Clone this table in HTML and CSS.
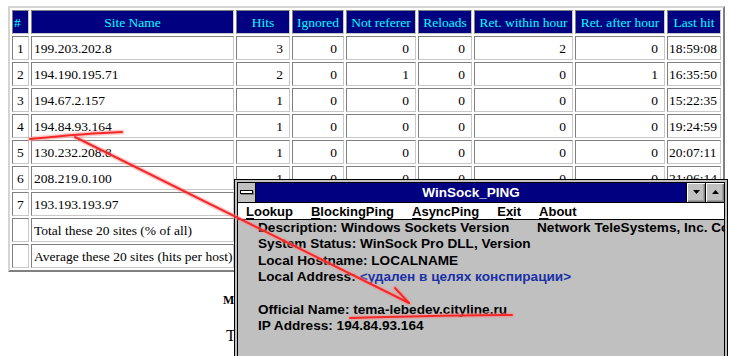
FILE: index.html
```html
<!DOCTYPE html>
<html>
<head>
<meta charset="utf-8">
<title>Top sites</title>
<link rel="stylesheet" href="styles.css">
</head>
<body>
<table class="stats">
  <thead>
    <tr>
      <th class="c-idx">#</th>
      <th class="c-site">Site Name</th>
      <th class="c-hits">Hits</th>
      <th class="c-ign">Ignored</th>
      <th class="c-nref">Not referer</th>
      <th class="c-rel">Reloads</th>
      <th class="c-rwh">Ret. within hour</th>
      <th class="c-rah">Ret. after hour</th>
      <th class="c-last">Last hit</th>
    </tr>
  </thead>
  <tbody>
    <tr><td class="idx">1</td><td class="site">199.203.202.8</td><td class="n">3</td><td class="n">0</td><td class="n">0</td><td class="n">0</td><td class="n">2</td><td class="n">0</td><td class="time">18:59:08</td></tr>
    <tr><td class="idx">2</td><td class="site">194.190.195.71</td><td class="n">2</td><td class="n">0</td><td class="n">1</td><td class="n">0</td><td class="n">0</td><td class="n">1</td><td class="time">16:35:50</td></tr>
    <tr><td class="idx">3</td><td class="site">194.67.2.157</td><td class="n">1</td><td class="n">0</td><td class="n">0</td><td class="n">0</td><td class="n">0</td><td class="n">0</td><td class="time">15:22:35</td></tr>
    <tr><td class="idx">4</td><td class="site">194.84.93.164</td><td class="n">1</td><td class="n">0</td><td class="n">0</td><td class="n">0</td><td class="n">0</td><td class="n">0</td><td class="time">19:24:59</td></tr>
    <tr><td class="idx">5</td><td class="site">130.232.208.8</td><td class="n">1</td><td class="n">0</td><td class="n">0</td><td class="n">0</td><td class="n">0</td><td class="n">0</td><td class="time">20:07:11</td></tr>
    <tr><td class="idx">6</td><td class="site">208.219.0.100</td><td class="n">1</td><td class="n">0</td><td class="n">0</td><td class="n">0</td><td class="n">0</td><td class="n">0</td><td class="time">21:06:14</td></tr>
    <tr><td class="idx">7</td><td class="site">193.193.193.97</td><td class="n">1</td><td class="n">0</td><td class="n">0</td><td class="n">0</td><td class="n">0</td><td class="n">0</td><td class="time">22:41:03</td></tr>
    <tr><td class="idx"></td><td class="site">Total these 20 sites (% of all)</td><td class="n">10</td><td class="n">0</td><td class="n">1</td><td class="n">0</td><td class="n">2</td><td class="n">1</td><td class="time"></td></tr>
    <tr><td class="idx"></td><td class="site">Average these 20 sites (hits per host)</td><td class="n">1.4</td><td class="n">0</td><td class="n">0.1</td><td class="n">0</td><td class="n">0.3</td><td class="n">0.1</td><td class="time"></td></tr>
  </tbody>
</table>

<div class="sub-heading">Most active hosts</div>
<div class="sub-title">Top 20 referring pages</div>

<div class="window">
  <div class="frame">
    <div class="titlebar">
      <div class="sysbox"><span class="dash"></span></div>
      <div class="title">WinSock_PING</div>
      <div class="btn"><svg width="9" height="5" viewBox="0 0 9 5"><polygon points="1,0 8,0 4.5,4" fill="#000"/></svg></div>
      <div class="btn"><svg width="9" height="5" viewBox="0 0 9 5"><polygon points="1,4 8,4 4.5,0" fill="#000"/></svg></div>
    </div>
    <div class="menubar">
      <span><u>L</u>ookup</span>
      <span><u>B</u>lockingPing</span>
      <span><u>A</u>syncPing</span>
      <span>E<u>x</u>it</span>
      <span><u>A</u>bout</span>
    </div>
    <div class="client">
      <div class="line"><span class="col1">Description: Windows Sockets Version</span><span>Network TeleSystems, Inc. Copyright</span></div>
      <div class="line">System Status: WinSock Pro DLL, Version</div>
      <div class="line">Local Hostname: LOCALNAME</div>
      <div class="line">Local Address: <span class="blue">&lt;удален в целях конспирации&gt;</span></div>
      <div class="line"></div>
      <div class="line">Official Name: tema-lebedev.cityline.ru</div>
      <div class="line">IP Address: 194.84.93.164</div>
    </div>
  </div>
</div>

<svg class="marks" width="732" height="356" viewBox="0 0 732 356">
  <g fill="none" stroke-linecap="round" stroke-linejoin="round">
    <g stroke="#ff8a8a" stroke-width="5" opacity="0.45">
      <path d="M30,139 C60,136 95,133 122,132"/>
      <path d="M75,137 L409,303"/>
      <path d="M395,288 L409,303"/>
      <path d="M350,318 C420,316 470,315 512,315"/>
    </g>
    <g stroke="#f42828" stroke-width="2">
      <path d="M30,139 C60,136 95,133 122,132"/>
      <path d="M75,137 L409,303"/>
      <path d="M395,288 L409,303"/>
      <path d="M350,318 C420,316 470,315 512,315"/>
    </g>
  </g>
</svg>
</body>
</html>
```

FILE: styles.css
```css
html, body {
  margin: 0;
  overflow: hidden;
}

body {
  padding: 6px 8px 0;
  background: #ffffff;
  font-family: "Liberation Serif", "Times New Roman", serif;
  color: #000;
  position: relative;
  width: 732px;
  height: 356px;
  box-sizing: border-box;
}

/* ---------- stats table ---------- */
.stats {
  border-collapse: separate;
  border-spacing: 2px;
  border: 2px solid;
  border-color: #d4d4d4 #808080 #808080 #d4d4d4;
  table-layout: fixed;
  width: 717px;
}

.stats th,
.stats td {
  box-sizing: border-box;
  height: 24px;
  border: 1px solid;
  border-color: #808080 #c8c8c8 #c8c8c8 #808080;
  padding: 0 5px;
  font-size: 13.5px;
  line-height: 16px;
  white-space: nowrap;
  overflow: visible;
  vertical-align: middle;
}

.stats th {
  background: #000080;
  color: #00ffff;
  font-weight: normal;
  text-align: center;
  padding: 1px 1px 0;
}

.stats th.c-idx { text-align: left; padding-left: 1px; }

.c-idx  { width: 17px; }
.c-site { width: 203px; }
.c-hits { width: 54px; }
.c-ign  { width: 52px; }
.c-nref { width: 70px; }
.c-rel  { width: 54px; }
.c-rwh  { width: 99px; }
.c-rah  { width: 90px; }
.c-last { width: 54px; }

.stats td { padding-top: 2px; }
.stats td.idx { padding-left: 4px; padding-right: 0; }
.stats td.site { padding-left: 2px; padding-right: 0; }
.stats td.n { text-align: right; padding-right: 6px; padding-left: 0; }
.stats td.time { padding-left: 1px; padding-right: 0; }

/* ---------- text under the table ---------- */
.sub-heading {
  margin-top: 21px;
  padding-left: 215px;
  font-size: 12px;
  line-height: 14px;
  font-weight: bold;
  white-space: nowrap;
}

.sub-title {
  margin-top: 20px;
  padding-left: 218px;
  font-size: 16px;
  line-height: 18px;
  white-space: nowrap;
}

/* ---------- WinSock window ---------- */
.window {
  position: absolute;
  left: 234px;
  top: 179px;
  width: 494px;
  height: 200px;
  box-sizing: border-box;
  border: 1px solid #000;
  padding: 2px;
  background: #c0c0c0;
  z-index: 5;
  font-family: "Liberation Sans", Arial, sans-serif;
  font-weight: bold;
  font-size: 13px;
}

.frame {
  height: 100%;
  box-sizing: border-box;
  border: 1px solid #000;
  display: flex;
  flex-direction: column;
  overflow: hidden;
}

.titlebar {
  display: flex;
  height: 19px;
  border-bottom: 1px solid #000;
  flex: none;
}

.sysbox {
  width: 17px;
  background: #c0c0c0;
  border-right: 1px solid #000;
  position: relative;
  flex: none;
}

.dash {
  position: absolute;
  left: 2px;
  top: 7px;
  width: 11px;
  height: 2px;
  background: #fff;
  border: 1px solid #000;
  box-shadow: 1px 1px 0 #808080;
}

.title {
  flex: 1;
  background: #000080;
  color: #fff;
  text-align: center;
  line-height: 19px;
  font-size: 13.5px;
}

.btn {
  width: 18px;
  flex: none;
  background: #c0c0c0;
  border-left: 1px solid #000;
  box-shadow: inset 1px 1px 0 #fff, inset -1px -1px 0 #808080, inset -2px -2px 0 #a0a0a0;
  display: flex;
  align-items: center;
  justify-content: center;
}

.btn svg { display: block; }

.menubar {
  display: flex;
  gap: 18px;
  height: 17px;
  padding: 1px 0 0 8px;
  box-sizing: border-box;
  background: #fff;
  border-bottom: 1px solid #000;
  line-height: 15px;
  flex: none;
  white-space: nowrap;
}

.menubar u {
  text-decoration-thickness: 1px;
  text-underline-offset: 2px;
}

.client {
  flex: 1;
  background: #c0c0c0;
  padding-left: 20px;
  white-space: nowrap;
  overflow: hidden;
  font-size: 13.6px;
}

.line {
  height: 16.4px;
  line-height: 16.4px;
  display: flex;
}

.col1 {
  width: 279px;
  flex: none;
}

.blue {
  color: #1a30a6;
  margin-left: 4px;
}

/* ---------- red hand-drawn annotations ---------- */
.marks {
  position: absolute;
  left: 0;
  top: 0;
  z-index: 10;
  pointer-events: none;
}
```
